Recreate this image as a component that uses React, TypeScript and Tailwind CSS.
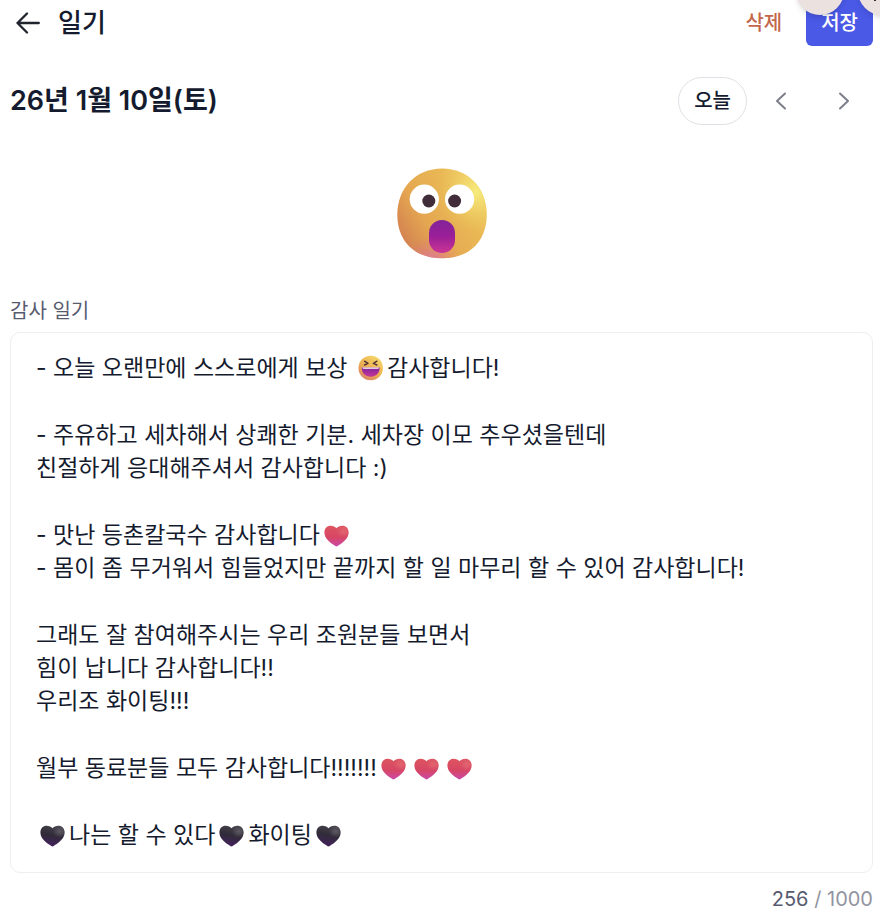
import { useState } from "react";
import type { ReactNode } from "react";

const MAX_LENGTH = 1000;

const SurprisedFace = () => (
  <svg viewBox="0 0 90 91" className="h-[91px] w-[90px]" role="img" aria-label="놀람">
    <defs>
      <linearGradient id="face-base" x1="0.95" y1="0.2" x2="0.05" y2="0.75">
        <stop offset="0" stopColor="#efca60" />
        <stop offset="0.3" stopColor="#e9b855" />
        <stop offset="0.7" stopColor="#e5a751" />
        <stop offset="1" stopColor="#d48450" />
      </linearGradient>
      <radialGradient id="face-light" cx="0.88" cy="0.26" r="0.46">
        <stop offset="0" stopColor="#f6ec7c" />
        <stop offset="0.4" stopColor="#f3df72" stopOpacity="0.6" />
        <stop offset="1" stopColor="#ecc45c" stopOpacity="0" />
      </radialGradient>
      <radialGradient id="face-blush" cx="0.38" cy="1.08" r="0.34">
        <stop offset="0" stopColor="#e070b4" />
        <stop offset="1" stopColor="#dd8070" stopOpacity="0" />
      </radialGradient>
      <linearGradient id="face-mouth" x1="0" y1="0" x2="0" y2="1">
        <stop offset="0" stopColor="#83239a" />
        <stop offset="0.5" stopColor="#9a1f98" />
        <stop offset="1" stopColor="#cb3594" />
      </linearGradient>
    </defs>
    {["face-base", "face-light", "face-blush"].map((fill) => (
      <path
        key={fill}
        d="M45 0.5C71 0.5 89.7 20 89.7 46.5C89.7 73 73 90.3 45 90.3C17 90.3 0.3 73 0.3 46.5C0.3 20 19 0.5 45 0.5Z"
        fill={`url(#${fill})`}
      />
    ))}
    <circle cx="27.3" cy="31.2" r="14.6" fill="#fff" />
    <circle cx="62.6" cy="31.2" r="14.6" fill="#fff" />
    <circle cx="31.8" cy="33" r="6.5" fill="#412d39" />
    <circle cx="57.6" cy="33" r="6.5" fill="#412d39" />
    <rect x="32" y="52" width="26" height="33" rx="13" fill="url(#face-mouth)" />
  </svg>
);

const Laugh = () => (
  <svg viewBox="0 0 33 26" className="inline-block h-[26px] w-[33px] align-[-5px]" role="img" aria-label="웃음">
    <defs>
      <linearGradient id="laugh-base" x1="0.8" y1="0.1" x2="0.2" y2="1">
        <stop offset="0" stopColor="#f3d468" />
        <stop offset="0.5" stopColor="#ecb050" />
        <stop offset="1" stopColor="#d98069" />
      </linearGradient>
      <linearGradient id="laugh-mouth" x1="0" y1="0" x2="0" y2="1">
        <stop offset="0" stopColor="#7f229a" />
        <stop offset="1" stopColor="#c6389b" />
      </linearGradient>
    </defs>
    <rect x="4.5" y="0.8" width="24.4" height="24.4" rx="12" fill="url(#laugh-base)" />
    <path
      d="M10.5 6.2L14 8.4L10.5 10M22.9 6.2L19.4 8.4L22.9 10"
      fill="none"
      stroke="#54313c"
      strokeWidth="1.4"
      strokeLinecap="round"
      strokeLinejoin="round"
    />
    <path d="M7.8 12.6H25.6C25.6 18.4 22 21.8 16.7 21.8C11.4 21.8 7.8 18.4 7.8 12.6Z" fill="url(#laugh-mouth)" />
    <path d="M8.4 12.6H25Q25 13.8 23.6 13.8H9.8Q8.4 13.8 8.4 12.6Z" fill="#fff" />
  </svg>
);

const heartPath =
  "M16.5 22.4C15.8 22.4 14.8 21.7 14 21.1C9.5 18 4.4 14 4.4 8.4C4.4 4.4 7.1 1.8 10.6 1.8C13.2 1.8 15.3 2.7 16.5 4.3C17.7 2.7 19.8 1.8 22.4 1.8C25.9 1.8 28.6 4.4 28.6 8.4C28.6 14 23.5 18 19 21.1C18.2 21.7 17.2 22.4 16.5 22.4Z";

const RedHeart = () => (
  <svg viewBox="0 0 33 24" className="inline-block h-6 w-[33px] align-[-5px]" role="img" aria-label="빨간 하트">
    <defs>
      <linearGradient id="red-heart" x1="0.5" y1="0" x2="0.5" y2="1">
        <stop offset="0" stopColor="#dd5560" />
        <stop offset="0.55" stopColor="#d74664" />
        <stop offset="1" stopColor="#cb48a8" />
      </linearGradient>
      <radialGradient id="red-heart-light" cx="0.8" cy="0.28" r="0.3">
        <stop offset="0" stopColor="#e67078" stopOpacity="0.7" />
        <stop offset="1" stopColor="#e67078" stopOpacity="0" />
      </radialGradient>
    </defs>
    <path d={heartPath} fill="url(#red-heart)" />
    <path d={heartPath} fill="url(#red-heart-light)" />
  </svg>
);

const BlackHeart = () => (
  <svg viewBox="0 0 33 24" className="inline-block h-6 w-[33px] align-[-5px]" role="img" aria-label="검은 하트">
    <defs>
      <linearGradient id="black-heart" x1="0.6" y1="0" x2="0.4" y2="1">
        <stop offset="0" stopColor="#45414a" />
        <stop offset="0.45" stopColor="#302b38" />
        <stop offset="1" stopColor="#44215f" />
      </linearGradient>
      <radialGradient id="black-heart-light" cx="0.8" cy="0.28" r="0.3">
        <stop offset="0" stopColor="#67636b" stopOpacity="0.8" />
        <stop offset="1" stopColor="#67636b" stopOpacity="0" />
      </radialGradient>
    </defs>
    <path d={heartPath} fill="url(#black-heart)" />
    <path d={heartPath} fill="url(#black-heart-light)" />
  </svg>
);

// Each entry is a paragraph, each item inside it is one line
const paragraphs: ReactNode[][] = [
  [
    <>
      - 오늘 오랜만에 스스로에게 보상 <Laugh />
      감사합니다!
    </>,
  ],
  ["- 주유하고 세차해서 상쾌한 기분. 세차장 이모 추우셨을텐데", "친절하게 응대해주셔서 감사합니다 :)"],
  [
    <>
      - 맛난 등촌칼국수 감사합니다
      <RedHeart />
    </>,
    "- 몸이 좀 무거워서 힘들었지만 끝까지 할 일 마무리 할 수 있어 감사합니다!",
  ],
  ["그래도 잘 참여해주시는 우리 조원분들 보면서", "힘이 납니다 감사합니다!!", "우리조 화이팅!!!"],
  [
    <>
      월부 동료분들 모두 감사합니다!!!!!!!
      <RedHeart />
      <RedHeart />
      <RedHeart />
    </>,
  ],
  [
    <>
      <BlackHeart />
      나는 할 수 있다
      <BlackHeart />
      화이팅
      <BlackHeart />
    </>,
  ],
];

const App = () => {
  const [length, setLength] = useState(256);

  return (
    <main className="relative overflow-hidden bg-white pr-[7px] pl-2.5 font-['Inter','Noto_Sans_CJK_KR',sans-serif] text-[#151b2e]">
      {/* Top bar */}
      <header className="flex h-11 items-center pt-0.5">
        <button type="button" aria-label="뒤로" className="flex h-11 w-9 items-center justify-center">
          <svg viewBox="0 0 24 22" className="h-[22px] w-6" fill="none" stroke="#20242f" strokeWidth="2.3">
            <path d="M11 1.5L1.5 11L11 20.5M1.5 11H22.8" strokeLinecap="round" strokeLinejoin="round" />
          </svg>
        </button>
        <h1 className="ml-3 text-[26px] leading-8 font-medium">일기</h1>
        <button type="button" className="mr-6 ml-auto text-xl font-medium text-[#c4664c]">
          삭제
        </button>
        <button
          type="button"
          className="h-[46px] shrink-0 rounded-md bg-[#4a59e6] px-[15px] text-xl font-medium text-white"
        >
          저장
        </button>
      </header>

      {/* Floating bubbles over the save button */}
      <div className="absolute -top-[33px] -right-[26px] flex gap-3.5">
        <span className="size-12 rounded-full bg-[#ebe2e0] shadow-md" />
        <span className="flex size-12 items-end justify-center rounded-full bg-[#ebe2e0] pr-3.5 pb-3.5 shadow-md">
          <svg viewBox="0 0 2 8" className="h-2 w-0.5" fill="#3b2a2c">
            <rect width="2" height="8" />
          </svg>
        </span>
      </div>

      {/* Date navigation */}
      <div className="mt-[33px] flex h-12 items-center gap-[5px]">
        <h2 className="mr-auto text-[27px] leading-8 font-semibold">26년 1월 10일(토)</h2>
        <button type="button" className="h-12 rounded-full border border-[#dfe1e6] px-[15px] text-xl font-medium">
          오늘
        </button>
        <button type="button" aria-label="이전 날" className="flex h-12 w-[58px] items-center justify-center">
          <svg viewBox="0 0 12 18" className="h-[18px] w-3" fill="none" stroke="#7c7f8a" strokeWidth="2">
            <path d="M10 1.5L2 9L10 16.5" strokeLinecap="round" strokeLinejoin="round" />
          </svg>
        </button>
        <button type="button" aria-label="다음 날" className="flex h-12 w-[58px] items-center justify-center">
          <svg viewBox="0 0 12 18" className="h-[18px] w-3" fill="none" stroke="#7c7f8a" strokeWidth="2">
            <path d="M2 1.5L10 9L2 16.5" strokeLinecap="round" strokeLinejoin="round" />
          </svg>
        </button>
      </div>

      <div className="mt-[43px] flex justify-center">
        <SurprisedFace />
      </div>

      {/* Diary entry */}
      <h3 id="diary-label" className="mt-[38px] text-xl leading-7 text-[#575b70]">
        감사 일기
      </h3>
      <div
        role="textbox"
        aria-multiline="true"
        aria-labelledby="diary-label"
        contentEditable
        suppressContentEditableWarning
        spellCheck={false}
        onInput={(e) => setLength(e.currentTarget.innerText.length)}
        className="mt-[7px] flex flex-col gap-[34px] rounded-[10px] border border-[#eeeef0] px-[25px] pt-[19px] pb-5 text-[23px] leading-[33px] outline-none"
      >
        {paragraphs.map((lines, i) => (
          <div key={i}>
            {lines.map((line, j) => (
              <p key={j}>{line}</p>
            ))}
          </div>
        ))}
      </div>
      <p className="mt-4 text-right text-xl leading-5 text-[#92949f]">
        <span className="text-[#575b70]">{length}</span> / {MAX_LENGTH}
      </p>
    </main>
  );
};

export default App;
